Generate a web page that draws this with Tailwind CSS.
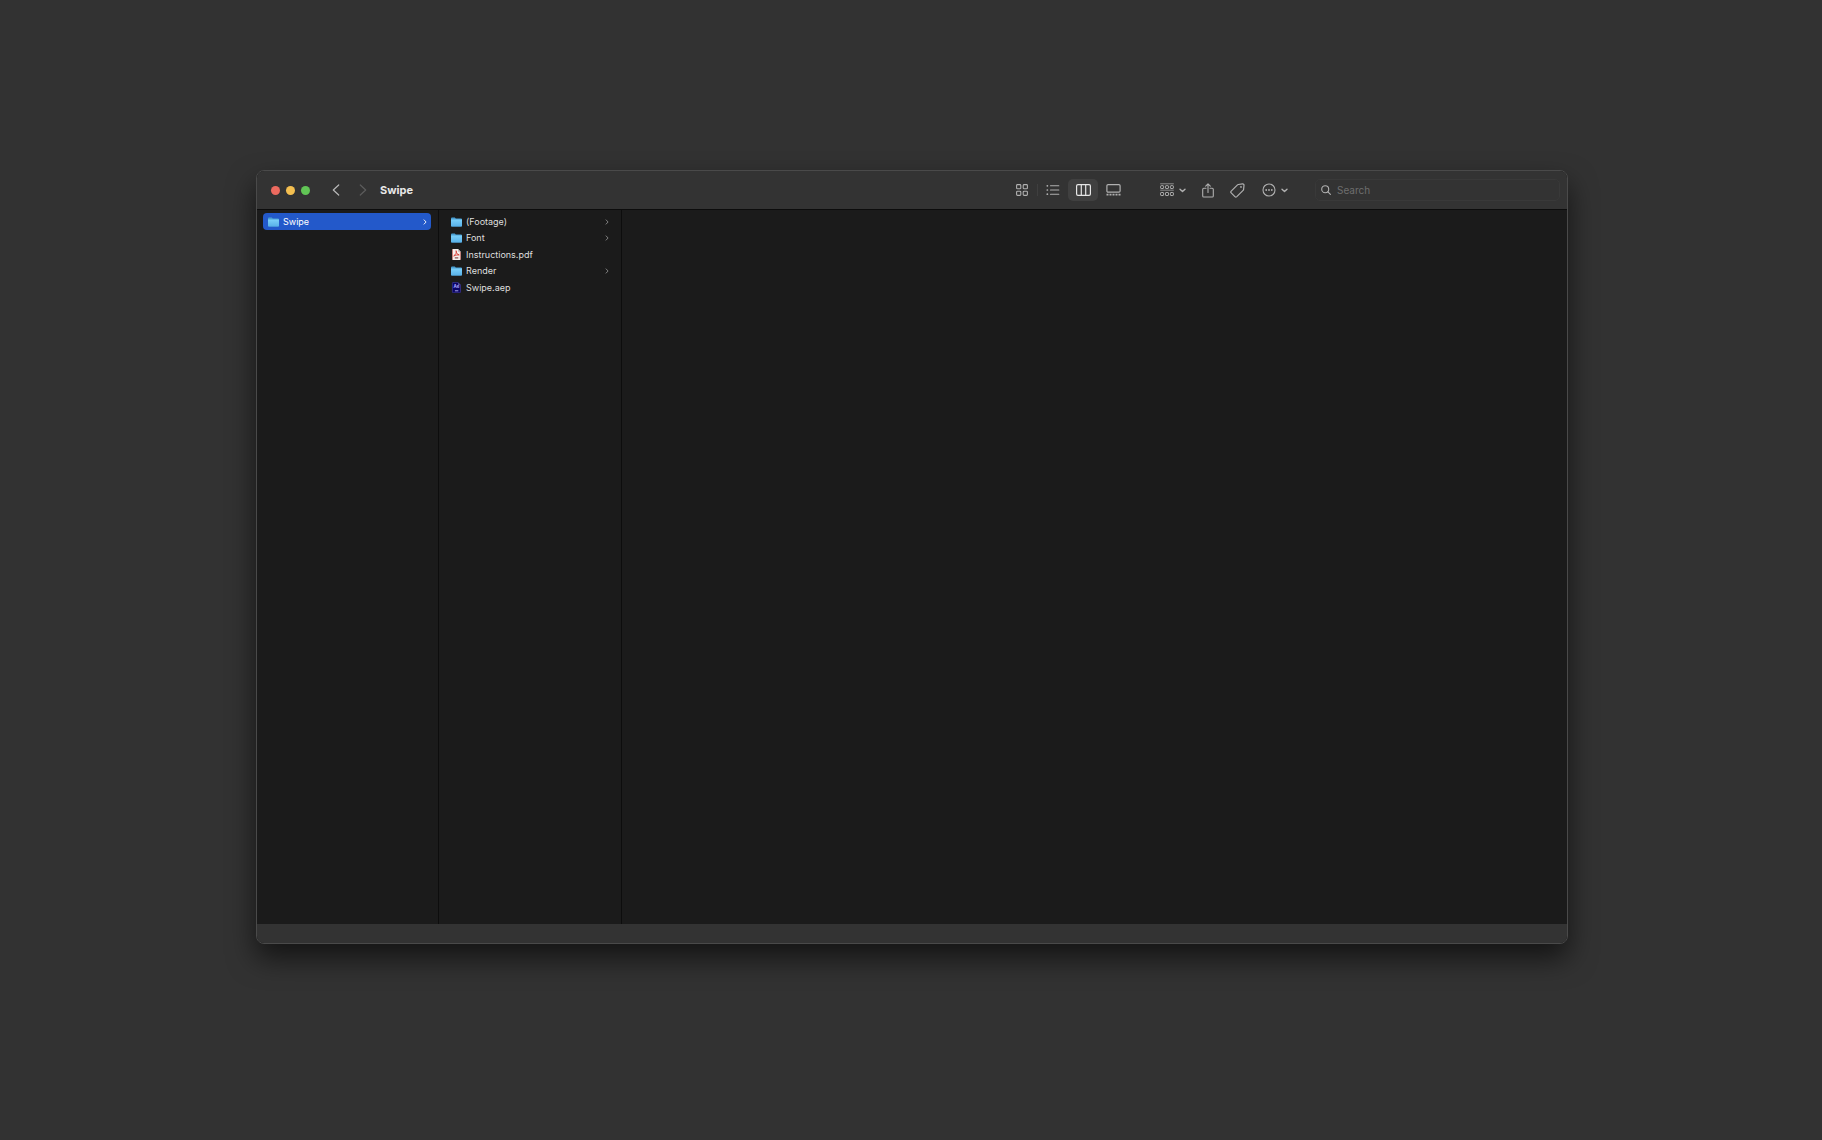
<!DOCTYPE html>
<html lang="en">
<head>
<meta charset="utf-8">
<title>Swipe</title>
<script src="https://cdn.jsdelivr.net/npm/@tailwindcss/browser@4"></script>
</head>
<body class="flex min-h-screen bg-[#323232] pt-[170px] pr-[254px] pb-[196px] pl-64 font-['Inter',sans-serif] text-[#dfdfdf]">
<svg class="size-0 shrink-0" aria-hidden="true">
  <defs>
    <linearGradient id="blue" x1="0" y1="0" x2="0" y2="1"><stop offset="0" stop-color="#7bd0fa"/><stop offset="1" stop-color="#58b0e8"/></linearGradient>
    <symbol id="folder" viewBox="0 0 11 10"><path d="M0 1.5Q0 .5 1 .5h2.800l1 1H10q1 0 1 1V8.700q0 .8-.8.800H.8Q0 9.500 0 8.700z" fill="#4a9fd3"/><path d="M0 2.600h11v6.100q0 .8-.8.800H.8q-.8 0-.8-.8z" fill="url(#blue)"/></symbol>
    <symbol id="right" viewBox="0 0 4 6"><path d="M.8.6 3.100 3 .8 5.400" fill="none" stroke="currentColor" stroke-width=".9"/></symbol>
    <symbol id="down" viewBox="0 0 7 5"><path d="M1 1.200 3.500 3.600 6 1.200" fill="none" stroke="currentColor" stroke-width="1.400" stroke-linecap="round" stroke-linejoin="round"/></symbol>
  </defs>
</svg>
<main class="flex min-w-0 flex-1 flex-col overflow-hidden rounded-[8px] border border-[#4a4a4a] bg-[#1b1b1b] shadow-[0_14px_28px_rgba(0,0,0,0.6)]">
  <header class="flex h-[39px] shrink-0 items-center border-b border-[#0c0c0c] bg-[#333333] pr-[7px] pl-[14px]">
    <div class="flex gap-1.5">
      <button aria-label="Close" class="size-[9px] rounded-full bg-[#ec6a5f]"></button>
      <button aria-label="Minimize" class="size-[9px] rounded-full bg-[#f4bf50]"></button>
      <button aria-label="Zoom" class="size-[9px] rounded-full bg-[#61c555]"></button>
    </div>
    <nav class="ml-3 flex" aria-label="History">
      <button aria-label="Back" class="flex h-5 w-[27px] items-center justify-center text-[#b8b8b8]"><svg class="h-3 w-2" viewBox="0 0 8 12" fill="none" stroke="currentColor" stroke-width="1.200" stroke-linecap="round" stroke-linejoin="round"><path d="M6.700 1 1.300 6l5.400 5"/></svg></button>
      <button aria-label="Forward" class="flex h-5 w-[27px] items-center justify-center text-[#5c5c5c]"><svg class="h-3 w-2" viewBox="0 0 8 12" fill="none" stroke="currentColor" stroke-width="1.200" stroke-linecap="round" stroke-linejoin="round"><path d="m1.300 1 5.400 5-5.400 5"/></svg></button>
    </nav>
    <h1 class="ml-1 text-[11px] leading-4 font-bold text-[#e8e8e8]">Swipe</h1>
    <div class="ml-auto flex items-center text-[#b0b0b0]">
      <div class="flex items-center">
        <button aria-label="Icon view" class="flex h-[22px] w-[30px] items-center justify-center"><svg class="size-3" viewBox="0 0 12 12" fill="none" stroke="currentColor" stroke-width="1.100"><rect x=".6" y=".6" width="4.200" height="4.200" rx=".9"/><rect x="7.200" y=".6" width="4.200" height="4.200" rx=".9"/><rect x=".6" y="7.200" width="4.200" height="4.200" rx=".9"/><rect x="7.200" y="7.200" width="4.200" height="4.200" rx=".9"/></svg></button>
        <span class="h-3 w-px bg-[#3f3f3f]"></span>
        <button aria-label="List view" class="flex h-[22px] w-[30px] items-center justify-center"><svg class="h-3 w-[14px]" viewBox="0 0 14 12" fill="none" stroke="currentColor" stroke-linecap="round"><path d="M4.500 1.800h8.300M4.500 6h8.300M4.500 10.200h8.300" stroke-width="1.100"/><path d="M1.300 1.800h.1M1.300 6h.1M1.300 10.200h.1" stroke-width="1.700"/></svg></button>
        <button aria-label="Column view" aria-pressed="true" class="flex h-[22px] w-[30px] items-center justify-center rounded-[5px] bg-[#404040] text-[#e6e6e6]"><svg class="h-3 w-[15px]" viewBox="0 0 15 12" fill="none" stroke="currentColor" stroke-width="1.200"><rect x=".6" y=".6" width="13.800" height="10.800" rx="1.400"/><path d="M5.300.6v10.800M9.700.6v10.800"/></svg></button>
        <button aria-label="Gallery view" class="flex h-[22px] w-[30px] items-center justify-center"><svg class="h-3 w-[15px]" viewBox="0 0 15 12" fill="none" stroke="currentColor"><rect x=".9" y=".6" width="13.200" height="7.600" rx="1.200" stroke-width="1.200"/><path d="M.5 10.700h14" stroke-width="1.800" stroke-dasharray="2 1"/></svg></button>
      </div>
      <button aria-label="Group items" class="ml-[30px] flex h-[22px] w-[30px] items-center justify-center gap-[5px]">
        <svg class="size-[14px]" viewBox="0 0 14 14" fill="none" stroke="currentColor" stroke-width="1"><path d="M.2.800h13.600M.2 7.200h13.600" stroke-opacity=".7"/><rect x=".6" y="2.700" width="3" height="2.800" rx=".6"/><rect x="5.500" y="2.700" width="3" height="2.800" rx=".6"/><rect x="10.400" y="2.700" width="3" height="2.800" rx=".6"/><rect x=".6" y="9.500" width="3" height="3" rx=".6"/><rect x="5.500" y="9.500" width="3" height="3" rx=".6"/><rect x="10.400" y="9.500" width="3" height="3" rx=".6"/></svg>
        <svg class="h-[5px] w-[7px]"><use href="#down"/></svg>
      </button>
      <button aria-label="Share" class="ml-[10px] flex h-[22px] w-5 items-center justify-center"><svg class="h-[15px] w-3" viewBox="0 0 12 15" fill="none" stroke="currentColor" stroke-width="1.100" stroke-linecap="round" stroke-linejoin="round"><path d="M4 5.300H1.800Q.7 5.300.7 6.400v6.500Q.7 14 1.800 14h8.400q1.100 0 1.100-1.100V6.400q0-1.100-1.100-1.100H8M6 9.500V1M3.700 3.200 6 .9l2.300 2.300"/></svg></button>
      <button aria-label="Edit tags" class="ml-[9px] flex h-[22px] w-5 items-center justify-center"><svg class="size-[15px]" viewBox="0 0 15 15" fill="none" stroke="currentColor" stroke-width="1.200" stroke-linejoin="round"><path d="M8.300 1.500 12.500.9q1.500-.1 1.500 1.300l-.4 4.200q0 .5-.5.900L6.800 13.600q-1 .9-1.900 0L1.200 9.900q-.9-.9 0-1.800L7.500 1.900q.3-.3.8-.4z"/><circle cx="11" cy="3.900" r=".9" fill="currentColor" stroke="none"/></svg></button>
      <button aria-label="More actions" class="ml-3 flex h-[22px] w-8 items-center justify-center gap-[5px]">
        <svg class="size-[14px]" viewBox="0 0 14 14"><circle cx="7" cy="7" r="6" fill="none" stroke="currentColor" stroke-width="1.100"/><g fill="currentColor"><circle cx="4.200" cy="7" r=".9"/><circle cx="7" cy="7" r=".9"/><circle cx="9.800" cy="7" r=".9"/></g></svg>
        <svg class="h-[5px] w-[7px]"><use href="#down"/></svg>
      </button>
      <label class="ml-6 flex h-[22px] w-[245px] items-center gap-1.5 rounded-[5px] border border-[#393939] px-[5px]">
        <svg class="size-[10px] shrink-0" viewBox="0 0 10 10" fill="none" stroke="currentColor" stroke-width="1.100" stroke-linecap="round"><circle cx="4.200" cy="4.200" r="3.500"/><path d="m6.900 6.900 2.500 2.500"/></svg>
        <input type="search" aria-label="Search" placeholder="Search" class="min-w-0 flex-1 bg-transparent text-[10px] leading-4 outline-none placeholder:text-[#6e6e6e]">
      </label>
    </div>
  </header>
  <div class="flex flex-1 text-[9px] leading-4">
    <ul class="w-[182px] shrink-0 border-r border-[#0d0d0d] pt-[3px] pr-[7px] pl-[6px]">
      <li><a href="#" class="flex h-[17px] items-center rounded-[4px] bg-[#2359ca] pr-1 pl-[5px] text-white"><svg class="mr-1 h-[10px] w-[11px]"><use href="#folder"/></svg>Swipe<svg class="ml-auto h-[6px] w-1"><use href="#right"/></svg></a></li>
    </ul>
    <ul class="w-[183px] shrink-0 border-r border-[#0d0d0d] pt-[3px] pr-3 pl-3">
      <li><a href="#" class="flex h-[17px] items-center"><svg class="mr-1 h-[10px] w-[11px]"><use href="#folder"/></svg>(Footage)<svg class="ml-auto h-[6px] w-1 text-[#8c8c8c]"><use href="#right"/></svg></a></li>
      <li><a href="#" class="flex h-4 items-center"><svg class="mr-1 h-[10px] w-[11px]"><use href="#folder"/></svg>Font<svg class="ml-auto h-[6px] w-1 text-[#8c8c8c]"><use href="#right"/></svg></a></li>
      <li><a href="#" class="flex h-[17px] items-center"><svg class="mr-1 size-[11px]" viewBox="0 0 11 11"><path d="M2 .1h5l2.700 2.700v7.400q0 .7-.7.700H2q-.8 0-.8-.7V.8q0-.7.8-.7z" fill="#f4efed"/><path d="M1.500.4v10.200M9.400 3v7.600" stroke="#c9574d" stroke-width=".6"/><path d="M7 .1v2.700h2.700z" fill="#c9bbb8"/><path d="M5.200 1.800c.9 1.900-.7 3.900-2.300 5M5.200 2.600c.1 1.700 1.200 2.900 3 3.300-2 0-3.500.2-5 .9" fill="none" stroke="#d7372c" stroke-width=".9" stroke-linecap="round"/><path d="M3.800 8.900h3.500" stroke="#7d3a35" stroke-width="1.100"/></svg>Instructions.pdf</a></li>
      <li><a href="#" class="flex h-4 items-center"><svg class="mr-1 h-[10px] w-[11px]"><use href="#folder"/></svg>Render<svg class="ml-auto h-[6px] w-1 text-[#8c8c8c]"><use href="#right"/></svg></a></li>
      <li><a href="#" class="flex h-[17px] items-center"><svg class="mr-1 size-[11px]" viewBox="0 0 11 11"><path d="M2 .4h5l2.500 2.500v7q0 .8-.8.800H2.200q-.8 0-.8-.8V1.200q0-.8.8-.8z" fill="#0b0566" stroke="#4742a8" stroke-width=".6"/><path d="M7 .4v2.500h2.500z" fill="#55529c"/><text x="2.400" y="6.300" font-size="4.500" font-weight="700" fill="#a9a6ff">Ae</text><path d="M3.900 8.800h3.400" stroke="#a5a3e6" stroke-width="1"/></svg>Swipe.aep</a></li>
    </ul>
    <section aria-label="Preview" class="flex-1"></section>
  </div>
  <footer class="h-[19px] shrink-0 bg-[#333333]"></footer>
</main>
</body>
</html>
